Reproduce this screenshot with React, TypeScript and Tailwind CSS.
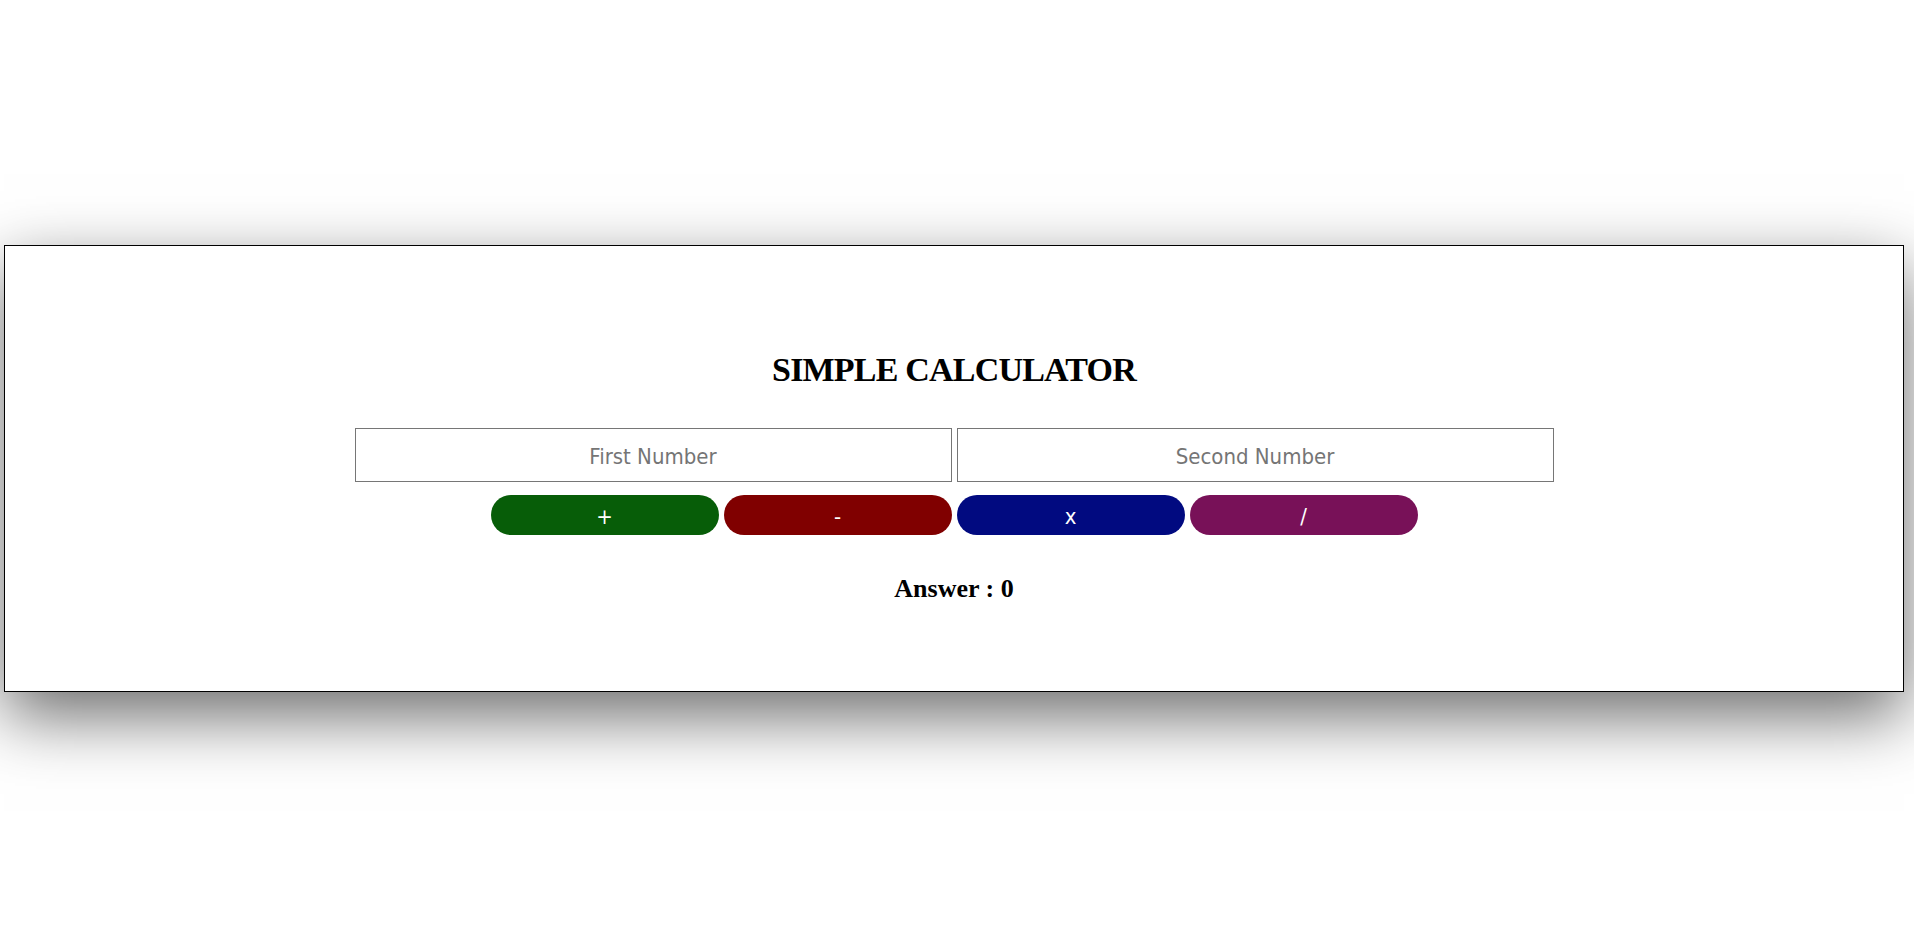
import React, { useState } from "react";

export default function App() {
  const [a, setA] = useState("");
  const [b, setB] = useState("");
  const [ans, setAns] = useState<number | string>(0);

  const calc = (op: string) => {
    const x = parseFloat(a);
    const y = parseFloat(b);
    if (isNaN(x) || isNaN(y)) return;
    if (op === "+") setAns(x + y);
    if (op === "-") setAns(x - y);
    if (op === "x") setAns(x * y);
    if (op === "/") setAns(x / y);
  };

  const sans = { fontFamily: '"DejaVu Sans Condensed", "DejaVu Sans", sans-serif', fontStretch: "condensed" as const };

  return (
    <div className="w-[1914px] h-[933px] bg-white overflow-hidden">
      <div className="ml-[4px] mt-[245px] w-[1900px] h-[447px] border border-black bg-white shadow-[0_24px_64px_rgba(0,0,0,0.58)] flex flex-col items-center">
        <h1 className="mt-[107px] h-[34px] leading-[34px] text-[34px] font-bold text-black tracking-[-0.8px] font-['Liberation_Serif',serif]">
          SIMPLE CALCULATOR
        </h1>
        <div className="mt-[41px] flex gap-[5px]">
          <input
            value={a}
            onChange={(e) => setA(e.target.value)}
            placeholder="First Number"
            style={sans}
            className="w-[597px] h-[54px] pt-[2px] border border-[#767676] text-center text-[22px] text-black placeholder:text-[#757575] outline-none"
          />
          <input
            value={b}
            onChange={(e) => setB(e.target.value)}
            placeholder="Second Number"
            style={sans}
            className="w-[597px] h-[54px] pt-[2px] border border-[#767676] text-center text-[22px] text-black placeholder:text-[#757575] outline-none"
          />
        </div>
        <div className="mt-[13px] flex gap-[5px]">
          <button onClick={() => calc("+")} style={sans} className="w-[228px] h-[40px] pt-[2px] rounded-[20px] bg-[#075d08] text-white text-[22px]">+</button>
          <button onClick={() => calc("-")} style={sans} className="w-[228px] h-[40px] pt-[2px] rounded-[20px] bg-[#800000] text-white text-[22px]">-</button>
          <button onClick={() => calc("x")} style={sans} className="w-[228px] h-[40px] pt-[2px] rounded-[20px] bg-[#010a80] text-white text-[22px]">x</button>
          <button onClick={() => calc("/")} style={sans} className="w-[228px] h-[40px] pt-[2px] rounded-[20px] bg-[#781158] text-white text-[22px]">/</button>
        </div>
        <div className="mt-[41px] h-[26px] leading-[26px] text-[26px] font-bold text-black font-['Liberation_Serif',serif]">
          Answer : {ans}
        </div>
      </div>
    </div>
  );
}
